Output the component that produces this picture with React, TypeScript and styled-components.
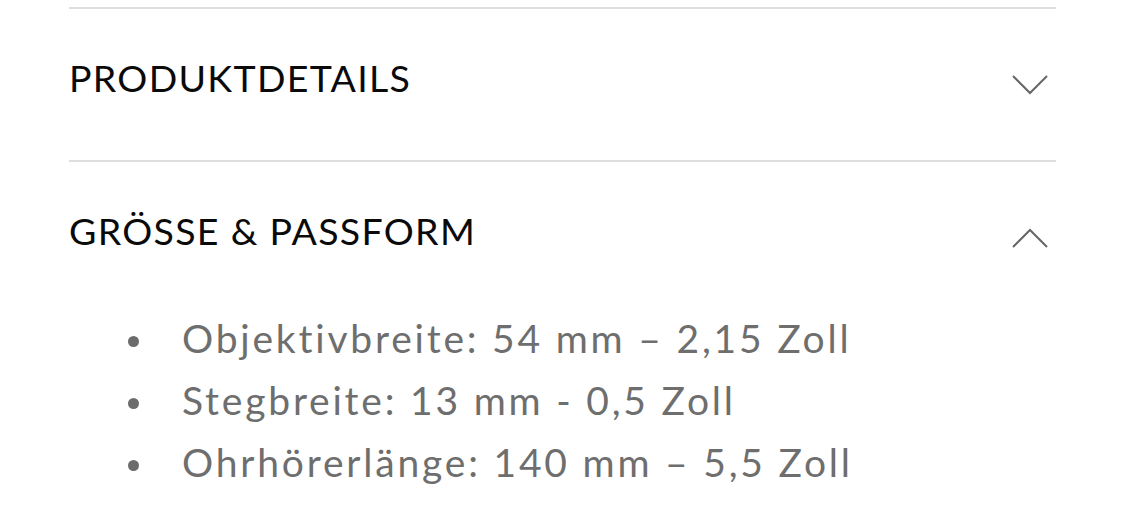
import React from "react";
import styled, { createGlobalStyle } from "styled-components";

const GlobalStyle = createGlobalStyle`
  html, body {
    margin: 0;
    padding: 0;
    background: #ffffff;
  }
  body {
    font-family: "Lato", "Liberation Sans", sans-serif;
    -webkit-font-smoothing: antialiased;
  }
`;

const Page = styled.main`
  width: 1125px;
  height: 531px;
  overflow: hidden;
  box-sizing: border-box;
  padding: 7px 69px 0 69px;
`;

const Accordion = styled.div`
  width: 987px;
  display: flex;
  flex-direction: column;
`;

const Section = styled.section`
  border-top: 2px solid #dedede;
  display: flex;
  flex-direction: column;
`;

const Header = styled.button`
  all: unset;
  box-sizing: border-box;
  height: 151px;
  display: flex;
  align-items: center;
  justify-content: space-between;
  padding: 0 8px 0 0;
  cursor: pointer;
`;

const Title = styled.h2`
  margin: 0 0 13px 0;
  font-family: "Lato", "Liberation Sans", sans-serif;
  font-weight: 400;
  font-size: 37.5px;
  letter-spacing: 1.3px;
  color: #0a0a0a;
  line-height: 1;
`;

const Chevron = styled.svg`
  width: 36px;
  height: 20px;
  flex: none;
`;

const List = styled.ul`
  margin: -6px 0 0 0;
  padding: 0 0 0 113px;
  list-style: none;
  display: flex;
  flex-direction: column;
`;

const Item = styled.li`
  position: relative;
  height: 62px;
  display: flex;
  align-items: center;
  font-family: "Lato", "Liberation Sans", sans-serif;
  font-size: 39px;
  letter-spacing: 2.8px;
  color: #6e6e6e;

  &::before {
    content: "";
    position: absolute;
    left: -54px;
    top: 50%;
    width: 11px;
    height: 11px;
    margin-top: -2px;
    border-radius: 50%;
    background: #6c6c6c;
  }
`;

const ChevronDown = () => (
  <Chevron viewBox="0 0 36 20">
    <polyline points="1,1 18,18 35,1" fill="none" stroke="#666" strokeWidth="2" />
  </Chevron>
);

const ChevronUp = () => (
  <Chevron viewBox="0 0 36 20">
    <polyline points="1,19 18,2 35,19" fill="none" stroke="#666" strokeWidth="2" />
  </Chevron>
);

const items = [
  "Objektivbreite: 54 mm – 2,15 Zoll",
  "Stegbreite: 13 mm - 0,5 Zoll",
  "Ohrhörerlänge: 140 mm – 5,5 Zoll",
];

export default function App() {
  return (
    <>
      <GlobalStyle />
      <Page>
        <Accordion>
          <Section>
            <Header>
              <Title>PRODUKTDETAILS</Title>
              <ChevronDown />
            </Header>
          </Section>
          <Section>
            <Header>
              <Title>GRÖSSE &amp; PASSFORM</Title>
              <ChevronUp />
            </Header>
            <List>
              {items.map((t) => (
                <Item key={t}>{t}</Item>
              ))}
            </List>
          </Section>
        </Accordion>
      </Page>
    </>
  );
}
